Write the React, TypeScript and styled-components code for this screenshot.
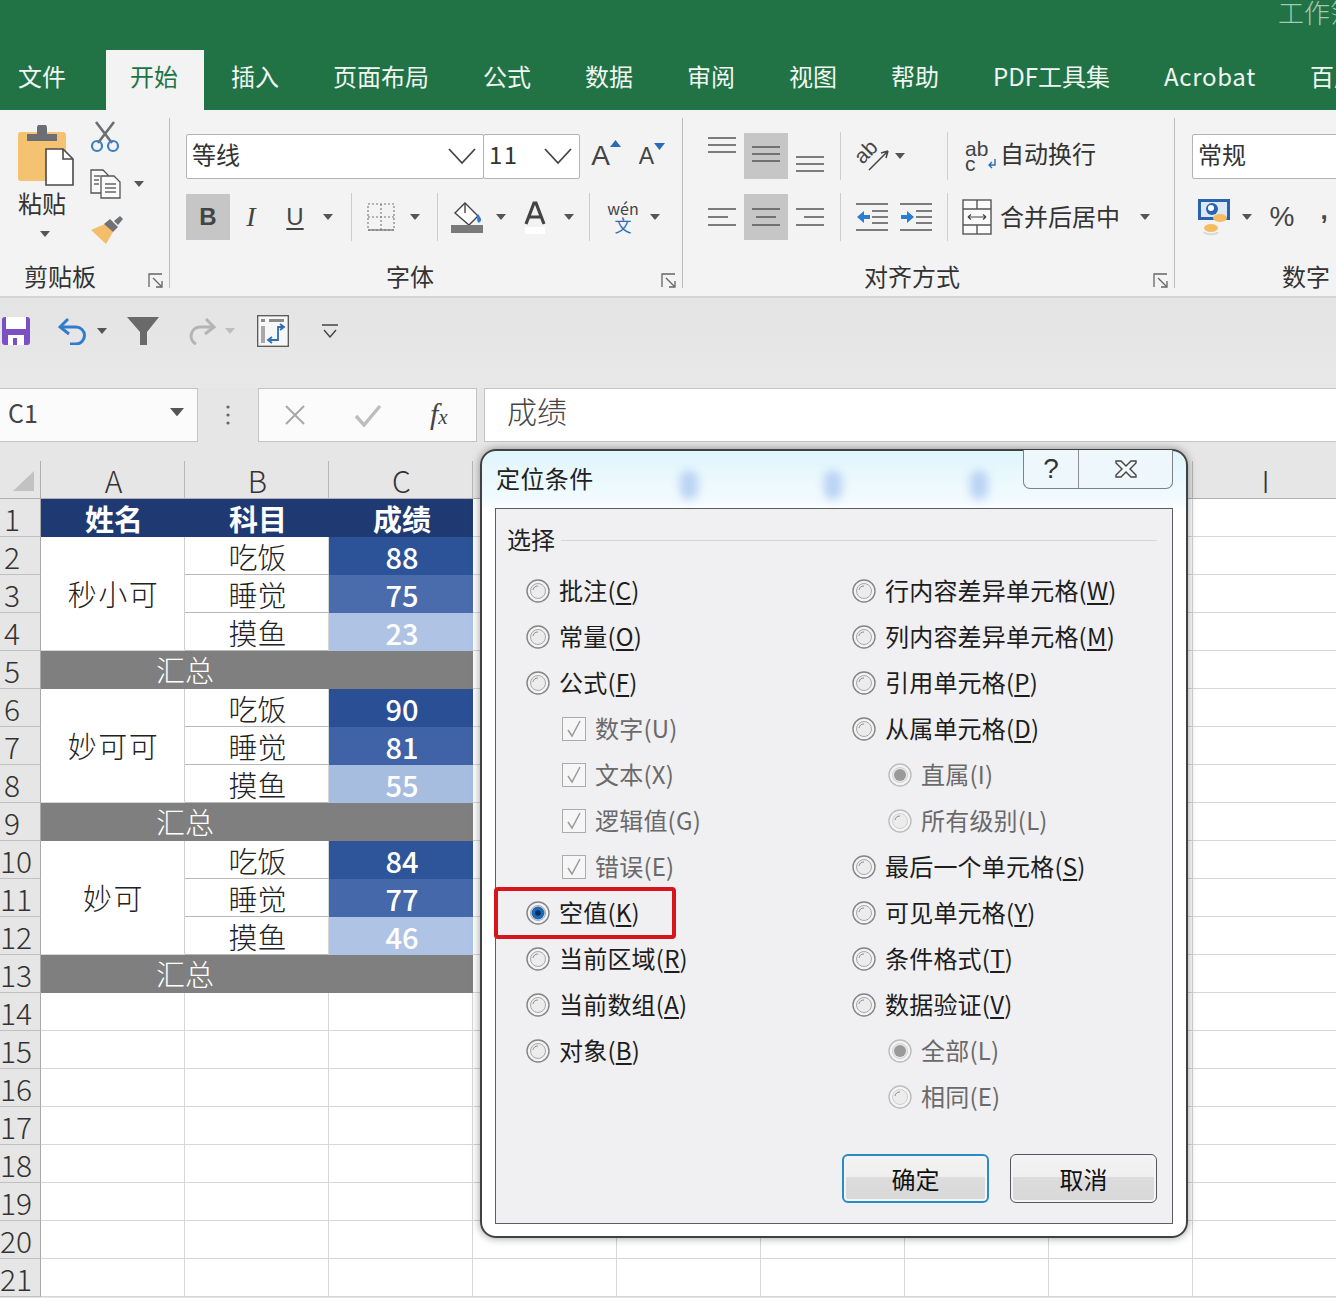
import React from 'react';
import styled, { createGlobalStyle } from 'styled-components';

const GlobalStyle = createGlobalStyle`
  html, body {
    margin: 0;
    padding: 0;
    background: #fff;
  }
  * {
    box-sizing: border-box;
  }
  body {
    font-family: "Noto Sans CJK SC", "Noto Sans", sans-serif;
    color: #2b2b2b;
  }
`;

const Page = styled.div`
  position: relative;
  width: 1336px;
  height: 1298px;
  overflow: hidden;
  background: #e6e6e6;
`;

/* ---------- title + tabs ---------- */

const TitleBar = styled.div`
  height: 50px;
  background: #217346;
  display: flex;
  justify-content: flex-end;
  overflow: hidden;
`;

const WorkbookName = styled.span`
  width: 58px;
  margin-top: -5px;
  font-size: 26px;
  line-height: 34px;
  white-space: nowrap;
  color: #a5c8b4;
  font-weight: 300;
`;

const TabBar = styled.nav`
  height: 60px;
  background: #217346;
  display: flex;
  align-items: stretch;
  margin-left: -9px;
  overflow: hidden;
`;

const Tab = styled.div<{ $active?: boolean; $tracking?: number }>`
  display: flex;
  align-items: center;
  flex-shrink: 0;
  padding: ${p => (p.$active ? '0 26px 10px 24px' : '0 27px 10px')};
  margin-left: ${p => (p.$active ? '13px' : '0')};
  font-size: 24px;
  letter-spacing: ${p => p.$tracking ?? 0}px;
  white-space: nowrap;
  color: ${p => (p.$active ? '#217346' : '#f1f6f3')};
  background: ${p => (p.$active ? '#f3f3f3' : 'transparent')};
`;

/* ---------- ribbon ---------- */

const Ribbon = styled.div`
  height: 188px;
  display: flex;
  background: #f3f3f3;
  border-bottom: 2px solid #d4d4d4;
  overflow: hidden;
`;

const Group = styled.section<{ $w: number; $pl: number }>`
  position: relative;
  flex: 0 0 ${p => p.$w}px;
  padding: 23px 0 0 ${p => p.$pl}px;

  &::after {
    content: '';
    position: absolute;
    right: 0;
    top: 8px;
    height: 170px;
    width: 1.5px;
    background: #bdbdbd;
  }
`;

const GroupBody = styled.div`
  height: 107px;
  display: flex;
  flex-direction: column;
  gap: 15px;
`;

const GroupLabel = styled.div<{ $left: number }>`
  position: absolute;
  top: 149px;
  left: ${p => p.$left}px;
  font-size: 24px;
  line-height: 34px;
  white-space: nowrap;
  color: #333;
`;

const Launcher = styled.span`
  position: absolute;
  right: 7px;
  top: 163px;
  display: flex;
`;

const Row = styled.div`
  display: flex;
  align-items: center;
  height: 46px;
`;

const Cell = styled.div<{ $w: number; $ml?: number; $on?: boolean }>`
  flex: 0 0 ${p => p.$w}px;
  height: 46px;
  margin-left: ${p => p.$ml ?? 0}px;
  display: flex;
  align-items: center;
  justify-content: center;
  background: ${p => (p.$on ? '#c6c6c6' : 'transparent')};
`;

const Sep = styled.div<{ $ml: number }>`
  flex: 0 0 1px;
  height: 48px;
  margin-left: ${p => p.$ml}px;
  background: #cdcdcd;
`;

const SelectBox = styled.div<{ $w: number }>`
  flex: 0 0 ${p => p.$w}px;
  height: 45px;
  background: #fff;
  border: 1.5px solid #b4b4b4;
  border-radius: 2px;
  display: flex;
  align-items: center;
  justify-content: space-between;
  padding: 0 6px 0 5px;
  font-size: 24px;
  color: #333;

  & + & {
    margin-left: -1px;
  }
`;

const SelectText = styled.span<{ $tracking?: number }>`
  margin-top: -6px;
  letter-spacing: ${p => p.$tracking ?? 0}px;
`;

const CmdText = styled.span<{ $lift?: number }>`
  margin-top: ${p => -(p.$lift ?? 6)}px;
  font-size: 24px;
  line-height: 34px;
  white-space: nowrap;
  color: #333;
`;

const LetterBtn = styled.span<{ $italic?: boolean; $bold?: boolean; $under?: boolean; $size?: number; $raise?: number }>`
  font-family: ${p => (p.$italic ? '"Liberation Serif", serif' : '"Liberation Sans", sans-serif')};
  font-size: ${p => p.$size ?? 24}px;
  font-style: ${p => (p.$italic ? 'italic' : 'normal')};
  font-weight: ${p => (p.$bold ? 700 : 400)};
  text-decoration: ${p => (p.$under ? 'underline' : 'none')};
  text-underline-offset: 3px;
  margin-top: ${p => -(p.$raise ?? 0)}px;
  color: #444;
`;

const GrowLetter = styled.span`
  display: flex;
  align-items: flex-start;
  font-family: "Liberation Sans", sans-serif;
  color: #444;
`;

const Phonetic = styled.span`
  display: flex;
  flex-direction: column;
  align-items: center;
  line-height: 15px;
  font-size: 16px;
  color: #444;
`;

const PhoneticChar = styled.span`
  color: #2b6cb8;
  font-size: 17px;
  line-height: 17px;
`;

const WrapGlyph = styled.span`
  width: 25px;
  display: grid;
  grid-template-columns: auto auto;
  align-items: center;
  justify-content: start;
  font-family: "Liberation Sans", sans-serif;
  font-size: 21px;
  line-height: 15px;
  color: #444;
`;

const RotatedAb = styled.span`
  display: block;
  margin-right: -16px;
  font-family: "Liberation Sans", sans-serif;
  font-size: 21px;
  line-height: 20px;
  color: #444;
  transform: rotate(-45deg) translate(1px, -5px);
`;

const WrapCmd = styled.div`
  display: flex;
  align-items: center;
  gap: 10px;
  margin-left: 17px;
`;

const MergeCmd = styled.div`
  display: flex;
  align-items: center;
  gap: 8px;
  margin-left: 14px;
`;

const PaperColumn = styled.div`
  width: 64px;
  margin-top: -8px;
  display: flex;
  flex-direction: column;
  align-items: flex-start;
`;

const PasteLabel = styled.span`
  margin: -1px 0 0 2px;
  font-size: 24px;
  line-height: 34px;
  color: #333;
`;

const PasteCaret = styled.span`
  display: flex;
  margin: 11px 0 0 24px;
`;

const ToolColumn = styled.div`
  display: flex;
  flex-direction: column;
  align-items: flex-start;
  margin: -12px 0 0 10px;
  gap: 16px;
`;

const ToolLine = styled.div`
  display: flex;
  align-items: center;
  gap: 12px;
`;

const ClipRow = styled.div`
  display: flex;
`;

/* ---------- quick access ---------- */

const QuickBar = styled.div`
  height: 90px;
  display: flex;
  align-items: flex-start;
  padding: 17px 0 0 1px;
  background: linear-gradient(#e4e4e4, #e8e8e8);
`;

const QuickItem = styled.span<{ $ml?: number }>`
  display: flex;
  align-items: center;
  height: 32px;
  margin-left: ${p => p.$ml ?? 0}px;
`;

/* ---------- formula bar ---------- */

const FormulaBar = styled.div`
  height: 54px;
  display: flex;
  align-items: stretch;
`;

const NameBox = styled.div`
  flex: 0 0 198px;
  background: #fbfbfb;
  border: 1.5px solid #c4c4c4;
  border-left: 0;
  display: flex;
  align-items: center;
  justify-content: space-between;
  padding: 0 13px 6px 8px;
  font-size: 25px;
  color: #444;
`;

const DotsCell = styled.div`
  flex: 0 0 60px;
  display: flex;
  align-items: center;
  justify-content: center;
`;

const FormulaButtons = styled.div`
  flex: 0 0 219px;
  background: #fbfbfb;
  border: 1.5px solid #c4c4c4;
  display: flex;
  align-items: center;
  padding-left: 25px;
  gap: 48px;
`;

const FxLabel = styled.span`
  font-family: "Liberation Serif", serif;
  font-style: italic;
  font-size: 30px;
  line-height: 30px;
  color: #444;
`;

const FxSub = styled.span`
  font-size: 21px;
`;

const FormulaInput = styled.div`
  flex: 1;
  margin-left: 7px;
  background: #fff;
  border: 1.5px solid #c4c4c4;
  border-right: 0;
  padding: 0 0 10px 22px;
  display: flex;
  align-items: center;
  font-size: 30px;
  font-weight: 300;
  color: #444;
`;

/* ---------- sheet ---------- */

const Sheet = styled.div`
  margin-top: 19px;
  display: grid;
  grid-template-columns: 41px repeat(9, 144px);
  grid-auto-rows: 38px;
  background: #fff;
`;

const Corner = styled.div`
  background: #e6e6e6;
  border-right: 1px solid #b0b0b0;
  border-bottom: 1px solid #b0b0b0;
  display: flex;
  align-items: flex-end;
  justify-content: flex-end;
  padding: 0 6px 7px 0;
`;

const ColHead = styled.div`
  background: #e6e6e6;
  border-right: 1px solid #b8b8b8;
  border-bottom: 1px solid #b0b0b0;
  display: flex;
  align-items: flex-end;
  justify-content: center;
  padding-left: 2px;
  font-size: 30px;
  line-height: 35px;
  font-weight: 300;
  color: #333;
`;

const RowHead = styled.div`
  background: #e6e6e6;
  border-right: 1px solid #a8a8a8;
  border-bottom: 1px solid #c0c0c0;
  padding-right: 16px;
  text-align: center;
  font-size: 30px;
  line-height: 39px;
  font-weight: 300;
  white-space: nowrap;
  color: #333;
  overflow: hidden;
`;

const Blank = styled.div`
  border-right: 1px solid #d6d6d6;
  border-bottom: 1px solid #d6d6d6;
`;

const NameCell = styled(Blank)`
  grid-row: span 3;
  display: flex;
  align-items: center;
  justify-content: center;
  padding: 0 0 2px 2px;
  border-right: 1px solid #cfcfcf;
  font-size: 29px;
  font-weight: 300;
  letter-spacing: 1.5px;
  color: #222;
`;

const TextCell = styled(Blank)`
  display: flex;
  align-items: center;
  justify-content: center;
  padding-left: 2px;
  border-bottom-color: #b8b8b8;
  font-size: 29px;
  line-height: 38px;
  font-weight: 300;
  color: #222;
`;

const HeadCell = styled.div`
  display: flex;
  align-items: center;
  justify-content: center;
  padding-left: 2px;
  background: #1f3a72;
  font-size: 29px;
  font-weight: 700;
  color: #fff;
`;

const ScoreCell = styled.div<{ $bg: string }>`
  display: flex;
  align-items: center;
  justify-content: center;
  padding-left: 2px;
  background: ${p => p.$bg};
  font-size: 29px;
  font-weight: 500;
  color: #fff;
`;

const TotalCell = styled.div`
  grid-column: span 3;
  display: flex;
  align-items: center;
  justify-content: center;
  padding: 0 144px 2px 0;
  background: #7f7f7f;
  font-size: 29px;
  font-weight: 300;
  color: #fff;
`;

/* ---------- dialog ---------- */

const Dialog = styled.div`
  position: absolute;
  left: 480px;
  top: 449px;
  width: 708px;
  height: 789px;
  border: 2px solid #3f4245;
  border-radius: 16px;
  background: linear-gradient(#e0f5fc 0, #f2fbfe 50px, #fff 60px);
  box-shadow: 0 0 9px rgba(0, 0, 0, 0.4);
  padding: 57px 13px 0 13px;
`;

const DialogTitle = styled.div`
  position: absolute;
  left: 14px;
  top: 10px;
  font-size: 24px;
  line-height: 34px;
  letter-spacing: 0.4px;
  color: #222;
`;

const Smudge = styled.span<{ $x: number }>`
  position: absolute;
  left: ${p => p.$x}px;
  top: 19px;
  width: 18px;
  height: 30px;
  border-radius: 9px;
  background: #a9c6f2;
  opacity: 0.75;
  filter: blur(5px);
`;

const WindowButtons = styled.div`
  position: absolute;
  right: 13px;
  top: -1px;
  width: 150px;
  height: 39px;
  display: flex;
  border: 1.5px solid #7d8286;
  border-top: 0;
  border-radius: 0 0 7px 7px;
  background: #eef8fc;
`;

const HelpButton = styled.div`
  flex: 0 0 55px;
  display: flex;
  align-items: center;
  justify-content: center;
  border-right: 1.5px solid #8c9094;
  font-family: "Liberation Sans", sans-serif;
  font-size: 28px;
  color: #333;
`;

const CloseButton = styled.div`
  flex: 1;
  display: flex;
  align-items: center;
  justify-content: center;
`;

const Panel = styled.div`
  height: 716px;
  background: #f0eff1;
  border: 1.5px solid #5c5f62;
  display: flex;
  flex-direction: column;
  padding: 14px 15px 20px 11px;
`;

const LegendRow = styled.div`
  display: flex;
  align-items: center;
  gap: 6px;
  height: 34px;
  font-size: 24px;
  color: #222;

  &::after {
    content: '';
    flex: 1;
    height: 1px;
    background: #d6d6d6;
  }
`;

const LegendText = styled.span`
  margin-top: -4px;
`;

const OptionGrid = styled.div`
  display: grid;
  grid-template-columns: 326px 1fr;
  margin: 11px 0 0 19px;
`;

const OptionColumn = styled.div`
  display: flex;
  flex-direction: column;
`;

const Option = styled.div<{ $indent?: boolean; $dim?: boolean }>`
  position: relative;
  height: 46px;
  display: flex;
  align-items: center;
  gap: 9px;
  padding-left: ${p => (p.$indent ? 36 : 0)}px;
  font-size: 24px;
  letter-spacing: 0.2px;
  white-space: nowrap;
  color: ${p => (p.$dim ? '#6a6a6a' : '#1d1d1d')};
`;

const OptionText = styled.span`
  margin-top: -4px;
`;

const KeyLetter = styled.span<{ $dim?: boolean }>`
  text-decoration: ${p => (p.$dim ? 'none' : 'underline')};
  text-underline-offset: 3px;
`;

const RedBox = styled.span`
  position: absolute;
  left: -32px;
  top: -3px;
  width: 182px;
  height: 52px;
  border: 4px solid #d8141c;
  border-radius: 4px;
`;

const CheckMark = styled.span`
  flex: 0 0 24px;
  height: 24px;
  display: flex;
  align-items: center;
  justify-content: center;
  background: #f6f6f6;
  border: 1.5px solid #ababab;
`;

const ButtonRow = styled.div`
  margin-top: auto;
  display: flex;
  justify-content: flex-end;
  gap: 21px;
`;

const DialogButton = styled.div<{ $primary?: boolean }>`
  width: 147px;
  height: 49px;
  display: flex;
  align-items: center;
  justify-content: center;
  font-size: 24px;
  color: #111;
  border: ${p => (p.$primary ? '2.5px solid #2a8cc4' : '1.5px solid #55585b')};
  border-radius: 6px;
  background: linear-gradient(#f3f3f3 0, #efefef 46%, #dcdcdc 48%, #d8d8d8 100%);
  box-shadow: inset 0 0 0 2px #f4f4f4;
`;

/* ---------- drawings ---------- */

const Caret = ({ c = '#555', w = 10 }: { c?: string; w?: number }) => (
  <svg width={w} height={w * 0.6} viewBox="0 0 10 6">
    <path d="M0 0h10L5 6z" fill={c} />
  </svg>
);

const Chevron = () => (
  <svg width="30" height="18" viewBox="0 0 30 18">
    <path d="M2 2l13 14L28 2" fill="none" stroke="#444" strokeWidth="1.8" />
  </svg>
);

const PasteIcon = () => (
  <svg width="60" height="62" viewBox="0 0 60 62">
    <rect x="2" y="7" width="48" height="49" rx="3" fill="#f5c271" />
    <path d="M11 9h30v7H11zM21 3a5 5 0 0 1 10 0v6H21z" fill="#6b6e72" />
    <path d="M30 24h17l10 10v26H30z" fill="#fff" stroke="#4a4a4a" strokeWidth="1.6" />
    <path d="M47 24v10h10" fill="none" stroke="#4a4a4a" strokeWidth="1.6" />
  </svg>
);

const ScissorsIcon = () => (
  <svg width="30" height="32" viewBox="0 0 30 32">
    <path d="M6 1l16 21M24 1L8 22" stroke="#6b6e72" strokeWidth="2.6" fill="none" />
    <circle cx="7" cy="25" r="5" fill="none" stroke="#3d7fc6" strokeWidth="2.2" />
    <circle cx="23" cy="25" r="5" fill="none" stroke="#3d7fc6" strokeWidth="2.2" />
  </svg>
);

const CopyIcon = () => (
  <svg width="32" height="30" viewBox="0 0 32 30">
    <path d="M1 1h12l5 5v18H1z" fill="#fafafa" stroke="#555" strokeWidth="1.3" />
    <path d="M11 7h13l6 6v16H11z" fill="#fafafa" stroke="#555" strokeWidth="1.3" />
    <path d="M4 7h6M4 11h5M4 15h5M15 15h11M15 19h11M15 23h11" stroke="#666" strokeWidth="1.3" />
  </svg>
);

const BrushIcon = () => (
  <svg width="34" height="30" viewBox="0 0 34 30">
    <path d="M1 15l14-6 8 8-7 12z" fill="#f3bd6b" />
    <path d="M14 9l6-5 8 8-5 5z" fill="#707276" />
    <path d="M24 6l6-5 3 3-5 6z" fill="#707276" />
  </svg>
);

const LauncherIcon = () => (
  <svg width="15" height="15" viewBox="0 0 15 15">
    <path d="M1 14V1h13" fill="none" stroke="#666" strokeWidth="1.3" />
    <path d="M5 5l8 8M8 14h6V8" fill="none" stroke="#666" strokeWidth="1.3" />
  </svg>
);

const BorderIcon = () => (
  <svg width="28" height="28" viewBox="0 0 28 28">
    <path d="M1 1h26v26H1zM14 1v26M1 14h26" fill="none" stroke="#777" strokeWidth="1.1" strokeDasharray="2 2" />
    <path d="M1 27h26" stroke="#777" strokeWidth="1.3" />
  </svg>
);

const FillIcon = () => (
  <svg width="34" height="34" viewBox="0 0 34 34">
    <path d="M15 3l13 13-9 9-14-12z" fill="#fff" stroke="#444" strokeWidth="1.4" />
    <path d="M15 3v10" stroke="#444" strokeWidth="1.4" />
    <path d="M28 14c3 4 4 6 2 8s-4-1-2-8z" fill="#2b7cd3" />
    <rect x="1" y="25" width="32" height="8" fill="#7a7a7a" />
  </svg>
);

const FontColorIcon = () => (
  <svg width="26" height="36" viewBox="0 0 26 36">
    <rect x="3" y="28" width="20" height="7" fill="#fff" />
    <path d="M4 25L12 4h2l8 21M7 18h12" fill="none" stroke="#444" strokeWidth="3.2" />
  </svg>
);

const TinyUp = () => (
  <svg width="11" height="7" viewBox="0 0 11 7">
    <path d="M0 7h11L5.5 0z" fill="#2b6cb8" />
  </svg>
);

const TinyDown = () => (
  <svg width="11" height="7" viewBox="0 0 11 7">
    <path d="M0 0h11L5.5 7z" fill="#2b6cb8" />
  </svg>
);

const EnterArrow = () => (
  <svg width="9" height="10" viewBox="0 0 9 10">
    <path d="M7 0v6H2M4 3L1 6l3 3" fill="none" stroke="#2b6cb8" strokeWidth="1.4" />
  </svg>
);

// top, middle and bottom vertical alignment: same three lines at another height
const VAlignIcon = ({ y }: { y: number }) => (
  <svg width="28" height="46" viewBox="0 0 28 46">
    <path d={`M0 ${y}h28M0 ${y + 7}h28M0 ${y + 14}h28`} stroke="#555" strokeWidth="1.6" fill="none" />
  </svg>
);

const AlignIcon = ({ kind }: { kind: 'left' | 'center' | 'right' }) => {
  const mid = kind === 'left' ? [0, 20] : kind === 'center' ? [4, 24] : [8, 28];
  return (
    <svg width="28" height="20" viewBox="0 0 28 20">
      <path d={`M0 2h28M${mid[0]} 10H${mid[1]}M0 18h28`} stroke="#555" strokeWidth="1.6" fill="none" />
    </svg>
  );
};

const OrientIcon = () => (
  <svg width="24" height="30" viewBox="0 0 24 30">
    <path d="M4 29L23 10M23 10l-7 2M23 10l-2 7" fill="none" stroke="#444" strokeWidth="1.5" />
  </svg>
);

const IndentIcon = ({ dir }: { dir: 'in' | 'out' }) => (
  <svg width="32" height="28" viewBox="0 0 32 28">
    <path d="M0 1h32M16 8h16M16 14h16M16 20h16M0 27h32" stroke="#555" strokeWidth="1.5" />
    {dir === 'out' ? (
      <path d="M1 14l7-6v4h6v4H8v4z" fill="#2b7cd3" />
    ) : (
      <path d="M14 14l-7-6v4H1v4h6v4z" fill="#2b7cd3" />
    )}
  </svg>
);

const MergeIcon = () => (
  <svg width="30" height="36" viewBox="0 0 30 36">
    <rect x="1" y="1" width="28" height="34" fill="#fafafa" stroke="#555" strokeWidth="1.4" />
    <path d="M1 10h28M1 26h28M15 1v9M15 26v9" stroke="#555" strokeWidth="1.4" />
    <path d="M6 18h18M6 18l3-2.5M6 18l3 2.5M24 18l-3-2.5M24 18l-3 2.5" stroke="#444" strokeWidth="1.2" fill="none" />
  </svg>
);

const MoneyIcon = () => (
  <svg width="34" height="38" viewBox="0 0 34 38">
    <rect x="1" y="1" width="32" height="21" fill="#2a62b0" />
    <rect x="4" y="4" width="26" height="15" fill="#dce8f6" />
    <circle cx="15" cy="11" r="6" fill="#2a62b0" />
    <circle cx="14" cy="10" r="3" fill="#fff" />
    <ellipse cx="23" cy="20" rx="7" ry="4" fill="#f4bd60" />
    <ellipse cx="14" cy="30" rx="7" ry="4" fill="#f4bd60" />
    <path d="M7 34c2 3 12 3 14 0" stroke="#d8d8d8" strokeWidth="2" fill="none" />
  </svg>
);

const SaveIcon = () => (
  <svg width="30" height="30" viewBox="0 0 30 30">
    <rect x="1" y="1" width="28" height="28" rx="3" fill="#7d4fc4" />
    <rect x="5" y="1" width="20" height="12" fill="#fff" />
    <rect x="7" y="19" width="16" height="10" fill="#fff" />
    <rect x="12" y="22" width="4" height="7" fill="#7d4fc4" />
  </svg>
);

const UndoIcon = () => (
  <svg width="30" height="28" viewBox="0 0 30 28">
    <path d="M10 2L2 10l9 7" fill="none" stroke="#2f7ccf" strokeWidth="3" />
    <path d="M3 10h15a8 8 0 0 1 0 17h-6" fill="none" stroke="#2f7ccf" strokeWidth="3" />
  </svg>
);

const RedoIcon = () => (
  <svg width="30" height="28" viewBox="0 0 30 28">
    <path d="M19 2l8 8-9 7" fill="none" stroke="#b4b4b4" strokeWidth="3" />
    <path d="M26 10H13a9 9 0 0 0-4 17" fill="none" stroke="#b4b4b4" strokeWidth="3" />
  </svg>
);

const FilterIcon = () => (
  <svg width="32" height="30" viewBox="0 0 32 30">
    <path d="M0 1h32L20 16v13h-7V16z" fill="#6a6a6a" />
  </svg>
);

const PivotIcon = () => (
  <svg width="32" height="32" viewBox="0 0 32 32">
    <rect x="0.7" y="0.7" width="30.6" height="30.6" fill="#f7f7f7" stroke="#555" strokeWidth="1.3" />
    <path d="M4 4h4v3H4zM12 4h15v3H12z" fill="#8a8a8a" />
    <rect x="4" y="11" width="4" height="17" fill="#a8a8a8" />
    <path d="M13 25h8V12h5M23 9l4 3-4 3M15 22l-4 3 4 3" fill="none" stroke="#2f6db5" strokeWidth="1.8" />
  </svg>
);

const CustomizeIcon = () => (
  <svg width="16" height="14" viewBox="0 0 16 14">
    <path d="M0 1h16M2 6l6 7 6-7" fill="none" stroke="#444" strokeWidth="1.4" />
  </svg>
);

const Dots = () => (
  <svg width="4" height="20" viewBox="0 0 4 20">
    <circle cx="2" cy="2" r="1.6" fill="#666" />
    <circle cx="2" cy="10" r="1.6" fill="#666" />
    <circle cx="2" cy="18" r="1.6" fill="#666" />
  </svg>
);

const CrossIcon = () => (
  <svg width="22" height="22" viewBox="0 0 22 22">
    <path d="M2 2l18 18M20 2L2 20" stroke="#a8a8a8" strokeWidth="2" />
  </svg>
);

const TickIcon = () => (
  <svg width="28" height="24" viewBox="0 0 28 24">
    <path d="M2 13l8 9L26 3" fill="none" stroke="#bdbdbd" strokeWidth="3.4" />
  </svg>
);

const TriangleCorner = () => (
  <svg width="21" height="20" viewBox="0 0 21 20">
    <path d="M21 0v20H0z" fill="#c2c2c2" />
  </svg>
);

const CloseGlyph = () => (
  <svg width="24" height="20" viewBox="0 0 24 20">
    <path
      d="M2 2h5l5 5 5-5h5v2l-6 6 6 6v2h-5l-5-5-5 5H2v-2l6-6-6-6z"
      fill="#f4f7f8"
      stroke="#444"
      strokeWidth="1.4"
    />
  </svg>
);

type RadioState = 'off' | 'on' | 'offDim' | 'onDim';

const Radio = ({ state }: { state: RadioState }) => {
  const dim = state === 'offDim' || state === 'onDim';
  return (
    <svg width="24" height="24" viewBox="0 0 24 24" style={{ flex: '0 0 24px' }}>
      <circle cx="12" cy="12" r="11" fill="#f4f4f4" stroke={dim ? '#bdbdbd' : '#858585'} strokeWidth="1.4" />
      <circle cx="12" cy="12" r="7.5" fill="#ececec" stroke={dim ? '#d0d0d0' : '#a8a8a8'} strokeWidth="1" />
      {state === 'on' && <circle cx="12" cy="12" r="6.5" fill="#1c69b5" />}
      {state === 'on' && <circle cx="12" cy="12" r="2.8" fill="#0c2e5c" />}
      {state === 'onDim' && <circle cx="12" cy="12" r="6" fill="#9a9a9a" />}
      {(state === 'off' || state === 'offDim') && (
        <path d="M7 11a5 5 0 0 1 5-4" fill="none" stroke="#8f8f8f" strokeWidth="1" />
      )}
    </svg>
  );
};

const CheckIcon = () => (
  <svg width="16" height="18" viewBox="0 0 16 18">
    <path d="M2 10l4 6L14 1" fill="none" stroke="#9a9a9a" strokeWidth="1.5" />
  </svg>
);

/* ---------- data ---------- */

const tabs = ['文件', '开始', '插入', '页面布局', '公式', '数据', '审阅', '视图', '帮助', 'PDF工具集', 'Acrobat', '百度'];

const blocks = [
  { name: '秒小可', scores: [['吃饭', '88', '#2c5298'], ['睡觉', '75', '#4a6cac'], ['摸鱼', '23', '#afc4e4']] },
  { name: '妙可可', scores: [['吃饭', '90', '#2a4f94'], ['睡觉', '81', '#3f63a6'], ['摸鱼', '55', '#a6bde0']] },
  { name: '妙可', scores: [['吃饭', '84', '#2e5499'], ['睡觉', '77', '#4568aa'], ['摸鱼', '46', '#afc4e4']] },
];

type Opt = {
  label: string;
  key: string;
  kind?: 'check' | 'sub';
  radio?: RadioState;
  marked?: boolean;
};

const leftOptions: Opt[] = [
  { label: '批注', key: 'C' },
  { label: '常量', key: 'O' },
  { label: '公式', key: 'F' },
  { label: '数字', key: 'U', kind: 'check' },
  { label: '文本', key: 'X', kind: 'check' },
  { label: '逻辑值', key: 'G', kind: 'check' },
  { label: '错误', key: 'E', kind: 'check' },
  { label: '空值', key: 'K', radio: 'on', marked: true },
  { label: '当前区域', key: 'R' },
  { label: '当前数组', key: 'A' },
  { label: '对象', key: 'B' },
];

const rightOptions: Opt[] = [
  { label: '行内容差异单元格', key: 'W' },
  { label: '列内容差异单元格', key: 'M' },
  { label: '引用单元格', key: 'P' },
  { label: '从属单元格', key: 'D' },
  { label: '直属', key: 'I', kind: 'sub', radio: 'onDim' },
  { label: '所有级别', key: 'L', kind: 'sub', radio: 'offDim' },
  { label: '最后一个单元格', key: 'S' },
  { label: '可见单元格', key: 'Y' },
  { label: '条件格式', key: 'T' },
  { label: '数据验证', key: 'V' },
  { label: '全部', key: 'L', kind: 'sub', radio: 'onDim' },
  { label: '相同', key: 'E', kind: 'sub', radio: 'offDim' },
];

const columns = ['A', 'B', 'C', 'D', 'E', 'F', 'G', 'H', 'I'];

const emptyCells = (prefix: string, n: number) =>
  Array.from({ length: n }).map((_, i) => <Blank key={`${prefix}-${i}`} />);

const OptionRow = ({ opt }: { opt: Opt }) => {
  const dim = !!opt.kind;
  return (
    <Option $indent={dim} $dim={dim}>
      {opt.kind === 'check' ? (
        <CheckMark>
          <CheckIcon />
        </CheckMark>
      ) : (
        <Radio state={opt.radio ?? 'off'} />
      )}
      <OptionText>
        {opt.label}(<KeyLetter $dim={dim}>{opt.key}</KeyLetter>)
      </OptionText>
      {opt.marked && <RedBox />}
    </Option>
  );
};

const renderSheetRows = () => {
  const out: React.ReactNode[] = [];
  let row = 2;
  blocks.forEach((block, b) => {
    block.scores.forEach(([subject, score, bg], i) => {
      out.push(<RowHead key={`h${row}`}>{row}</RowHead>);
      if (i === 0) out.push(<NameCell key={`n${b}`}>{block.name}</NameCell>);
      out.push(<TextCell key={`s${row}`}>{subject}</TextCell>);
      out.push(<ScoreCell key={`c${row}`} $bg={bg}>{score}</ScoreCell>);
      out.push(...emptyCells(`r${row}`, 6));
      row += 1;
    });
    out.push(<RowHead key={`h${row}`}>{row}</RowHead>);
    out.push(<TotalCell key={`t${row}`}>汇总</TotalCell>);
    out.push(...emptyCells(`r${row}`, 6));
    row += 1;
  });
  for (; row <= 21; row += 1) {
    out.push(<RowHead key={`h${row}`}>{row}</RowHead>);
    out.push(...emptyCells(`r${row}`, 9));
  }
  return out;
};

const App: React.FC = () => {
  return (
    <Page>
      <GlobalStyle />
      <TitleBar>
        <WorkbookName>工作簿</WorkbookName>
      </TitleBar>
      <TabBar>
        {tabs.map(tab => (
          <Tab key={tab} $active={tab === '开始'} $tracking={tab === 'Acrobat' ? 0.7 : 0}>
            {tab}
          </Tab>
        ))}
      </TabBar>

      <Ribbon>
        <Group $w={170} $pl={16}>
          <ClipRow>
            <PaperColumn>
              <PasteIcon />
              <PasteLabel>粘贴</PasteLabel>
              <PasteCaret>
                <Caret />
              </PasteCaret>
            </PaperColumn>
            <ToolColumn>
              <ScissorsIcon />
              <ToolLine>
                <CopyIcon />
                <Caret />
              </ToolLine>
              <BrushIcon />
            </ToolColumn>
          </ClipRow>
          <GroupLabel $left={24}>剪贴板</GroupLabel>
          <Launcher>
            <LauncherIcon />
          </Launcher>
        </Group>

        <Group $w={513} $pl={16}>
          <GroupBody>
            <Row>
              <SelectBox $w={298}>
                <SelectText>等线</SelectText>
                <Chevron />
              </SelectBox>
              <SelectBox $w={97}>
                <SelectText $tracking={1.5}>11</SelectText>
                <Chevron />
              </SelectBox>
              <Cell $w={46} $ml={3}>
                <GrowLetter>
                  <LetterBtn $size={28}>A</LetterBtn>
                  <TinyUp />
                </GrowLetter>
              </Cell>
              <Cell $w={46}>
                <GrowLetter>
                  <LetterBtn $size={23}>A</LetterBtn>
                  <TinyDown />
                </GrowLetter>
              </Cell>
            </Row>
            <Row>
              <Cell $w={44} $on>
                <LetterBtn $bold>B</LetterBtn>
              </Cell>
              <Cell $w={42}>
                <LetterBtn $italic $size={28}>I</LetterBtn>
              </Cell>
              <Cell $w={46}>
                <LetterBtn $under>U</LetterBtn>
              </Cell>
              <Cell $w={10} $ml={5}>
                <Caret />
              </Cell>
              <Sep $ml={18} />
              <Cell $w={58}>
                <BorderIcon />
              </Cell>
              <Cell $w={10}>
                <Caret />
              </Cell>
              <Sep $ml={17} />
              <Cell $w={58}>
                <FillIcon />
              </Cell>
              <Cell $w={10}>
                <Caret />
              </Cell>
              <Cell $w={58}>
                <FontColorIcon />
              </Cell>
              <Cell $w={10}>
                <Caret />
              </Cell>
              <Sep $ml={15} />
              <Cell $w={44} $ml={11}>
                <Phonetic>
                  wén
                  <PhoneticChar>文</PhoneticChar>
                </Phonetic>
              </Cell>
              <Cell $w={10} $ml={5}>
                <Caret />
              </Cell>
            </Row>
          </GroupBody>
          <GroupLabel $left={216}>字体</GroupLabel>
          <Launcher>
            <LauncherIcon />
          </Launcher>
        </Group>

        <Group $w={492} $pl={17}>
          <GroupBody>
            <Row>
              <Cell $w={44}>
                <VAlignIcon y={5} />
              </Cell>
              <Cell $w={44} $on>
                <VAlignIcon y={14} />
              </Cell>
              <Cell $w={44}>
                <VAlignIcon y={24} />
              </Cell>
              <Sep $ml={8} />
              <Cell $w={44} $ml={10}>
                <RotatedAb>ab</RotatedAb>
                <OrientIcon />
              </Cell>
              <Cell $w={10}>
                <Caret />
              </Cell>
              <Sep $ml={42} />
              <WrapCmd>
                <WrapGlyph>
                  <span>ab</span>
                  <span />
                  <span>c</span>
                  <EnterArrow />
                </WrapGlyph>
                <CmdText>自动换行</CmdText>
              </WrapCmd>
            </Row>
            <Row>
              <Cell $w={44}>
                <AlignIcon kind="left" />
              </Cell>
              <Cell $w={44} $on>
                <AlignIcon kind="center" />
              </Cell>
              <Cell $w={44}>
                <AlignIcon kind="right" />
              </Cell>
              <Sep $ml={8} />
              <Cell $w={32} $ml={15}>
                <IndentIcon dir="out" />
              </Cell>
              <Cell $w={32} $ml={12}>
                <IndentIcon dir="in" />
              </Cell>
              <Sep $ml={15} />
              <MergeCmd>
                <MergeIcon />
                <CmdText $lift={2}>合并后居中</CmdText>
              </MergeCmd>
              <Cell $w={10} $ml={20}>
                <Caret />
              </Cell>
            </Row>
          </GroupBody>
          <GroupLabel $left={181}>对齐方式</GroupLabel>
          <Launcher>
            <LauncherIcon />
          </Launcher>
        </Group>

        <Group $w={161} $pl={17}>
          <GroupBody>
            <Row>
              <SelectBox $w={170}>
                <SelectText>常规</SelectText>
              </SelectBox>
            </Row>
            <Row>
              <Cell $w={34} $ml={5}>
                <MoneyIcon />
              </Cell>
              <Cell $w={10} $ml={11}>
                <Caret />
              </Cell>
              <Cell $w={28} $ml={16}>
                <LetterBtn $size={28}>%</LetterBtn>
              </Cell>
              <Cell $w={12} $ml={22}>
                <LetterBtn $bold $size={26} $raise={14}>,</LetterBtn>
              </Cell>
            </Row>
          </GroupBody>
          <GroupLabel $left={107}>数字</GroupLabel>
        </Group>
      </Ribbon>

      <QuickBar>
        <QuickItem>
          <SaveIcon />
        </QuickItem>
        <QuickItem $ml={27}>
          <UndoIcon />
        </QuickItem>
        <QuickItem $ml={9}>
          <Caret />
        </QuickItem>
        <QuickItem $ml={20}>
          <FilterIcon />
        </QuickItem>
        <QuickItem $ml={28}>
          <RedoIcon />
        </QuickItem>
        <QuickItem $ml={8}>
          <Caret c="#bdbdbd" />
        </QuickItem>
        <QuickItem $ml={22}>
          <PivotIcon />
        </QuickItem>
        <QuickItem $ml={33}>
          <CustomizeIcon />
        </QuickItem>
      </QuickBar>

      <FormulaBar>
        <NameBox>
          C1
          <Caret w={14} />
        </NameBox>
        <DotsCell>
          <Dots />
        </DotsCell>
        <FormulaButtons>
          <CrossIcon />
          <TickIcon />
          <FxLabel>
            f<FxSub>x</FxSub>
          </FxLabel>
        </FormulaButtons>
        <FormulaInput>成绩</FormulaInput>
      </FormulaBar>

      <Sheet>
        <Corner>
          <TriangleCorner />
        </Corner>
        {columns.map(col => (
          <ColHead key={col}>{col}</ColHead>
        ))}
        <RowHead>1</RowHead>
        <HeadCell>姓名</HeadCell>
        <HeadCell>科目</HeadCell>
        <HeadCell>成绩</HeadCell>
        {emptyCells('r1', 6)}
        {renderSheetRows()}
      </Sheet>

      <Dialog>
        <Smudge $x={198} />
        <Smudge $x={342} />
        <Smudge $x={488} />
        <DialogTitle>定位条件</DialogTitle>
        <WindowButtons>
          <HelpButton>?</HelpButton>
          <CloseButton>
            <CloseGlyph />
          </CloseButton>
        </WindowButtons>
        <Panel>
          <LegendRow>
            <LegendText>选择</LegendText>
          </LegendRow>
          <OptionGrid>
            <OptionColumn>
              {leftOptions.map(opt => (
                <OptionRow key={opt.label} opt={opt} />
              ))}
            </OptionColumn>
            <OptionColumn>
              {rightOptions.map(opt => (
                <OptionRow key={opt.label} opt={opt} />
              ))}
            </OptionColumn>
          </OptionGrid>
          <ButtonRow>
            <DialogButton $primary>确定</DialogButton>
            <DialogButton>取消</DialogButton>
          </ButtonRow>
        </Panel>
      </Dialog>
    </Page>
  );
};

export default App;
